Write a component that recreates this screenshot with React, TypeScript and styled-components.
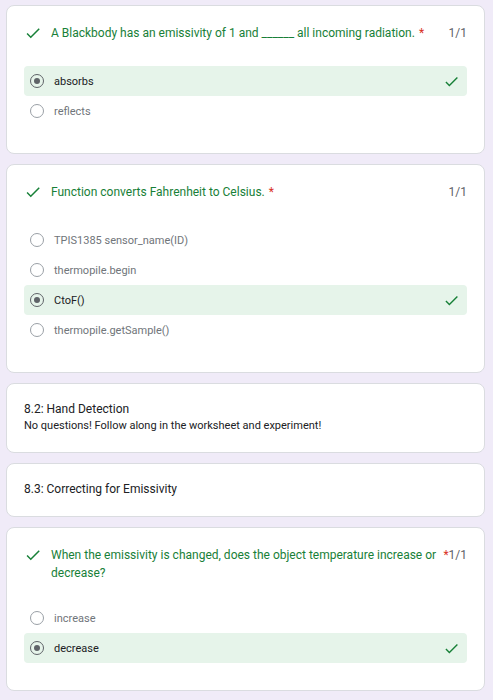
import React from "react";
import styled, { createGlobalStyle } from "styled-components";

const Global = createGlobalStyle`
  html, body { margin: 0; padding: 0; background: #f0ebf8; }
  body { font-family: Roboto, "Liberation Sans", Arial, sans-serif; -webkit-font-smoothing: antialiased; }
  * { box-sizing: border-box; }
`;

const Page = styled.div`
  display: flex;
  flex-direction: column;
  gap: 10px;
  padding: 5px 8px 10px 6px;
`;

const Card = styled.section`
  background: #fff;
  border: 1px solid #dadce0;
  border-radius: 8px;
  padding: 18px 17px 27px;
`;

const SectionCard = styled.section`
  background: #fff;
  border: 1px solid #dadce0;
  border-radius: 8px;
  padding: 16px 17px 18px;
`;

const Header = styled.div`
  display: flex;
  align-items: flex-start;
  min-height: 21px;
  margin-bottom: 21px;
  font-size: 12px;
  line-height: 18px;
`;

const HeaderIcon = styled.span`
  flex: none;
  width: 18px;
  height: 18px;
  margin-right: 9px;
  display: flex;
  color: #188038;
`;

const Title = styled.span`
  flex: 0 1 auto;
  color: #188038;
`;

const Star = styled.span`
  flex: none;
  margin-left: 4px;
  color: #d93025;
`;

const Score = styled.span`
  flex: none;
  margin-left: auto;
  color: #5f6368;
`;

const Options = styled.div`
  display: flex;
  flex-direction: column;
`;

const Row = styled.div<{ $correct?: boolean }>`
  display: flex;
  align-items: center;
  height: 30px;
  padding: 0 7px 0 6px;
  border-radius: 4px;
  background: ${(p) => (p.$correct ? "#e6f4ea" : "transparent")};
  font-size: 11px;
  color: ${(p) => (p.$correct ? "#202124" : "#70757a")};
`;

const Radio = styled.span<{ $checked?: boolean }>`
  flex: none;
  width: 14px;
  height: 14px;
  border-radius: 50%;
  border: 1.5px solid ${(p) => (p.$checked ? "#5f6368" : "#9aa0a6")};
  display: flex;
  align-items: center;
  justify-content: center;
  margin-right: 10px;
  &::after {
    content: "";
    width: 6px;
    height: 6px;
    border-radius: 50%;
    background: #5f6368;
    display: ${(p) => (p.$checked ? "block" : "none")};
  }
`;

const Label = styled.span`
  flex: 1;
`;

const RowCheck = styled.span`
  flex: none;
  width: 17px;
  height: 17px;
  display: flex;
  color: #188038;
`;

const SectionTitle = styled.div`
  font-size: 12px;
  line-height: 18px;
  color: #202124;
`;

const SectionDesc = styled.div`
  font-size: 11px;
  line-height: 16px;
  color: #202124;
`;

const Check = () => (
  <svg viewBox="0 0 24 24" width="100%" height="100%" fill="currentColor">
    <path d="M9 16.17L4.83 12l-1.42 1.41L9 19 21 7l-1.41-1.41z" />
  </svg>
);

type Q = { title: string; options: string[]; chosen: number };

const questions: Q[] = [
  {
    title: "A Blackbody has an emissivity of 1 and ______ all incoming radiation.",
    options: ["absorbs", "reflects"],
    chosen: 0,
  },
  {
    title: "Function converts Fahrenheit to Celsius.",
    options: ["TPIS1385 sensor_name(ID)", "thermopile.begin", "CtoF()", "thermopile.getSample()"],
    chosen: 2,
  },
  {
    title: "When the emissivity is changed, does the object temperature increase or decrease?",
    options: ["increase", "decrease"],
    chosen: 1,
  },
];

const Question = ({ q }: { q: Q }) => (
  <Card>
    <Header>
      <HeaderIcon>
        <Check />
      </HeaderIcon>
      <Title>{q.title}</Title>
      <Star>*</Star>
      <Score>1/1</Score>
    </Header>
    <Options>
      {q.options.map((o, i) => (
        <Row key={o} $correct={i === q.chosen}>
          <Radio $checked={i === q.chosen} />
          <Label>{o}</Label>
          {i === q.chosen && (
            <RowCheck>
              <Check />
            </RowCheck>
          )}
        </Row>
      ))}
    </Options>
  </Card>
);

export default function App() {
  return (
    <>
      <Global />
      <Page>
        <Question q={questions[0]} />
        <Question q={questions[1]} />
        <SectionCard>
          <SectionTitle>8.2: Hand Detection</SectionTitle>
          <SectionDesc>No questions! Follow along in the worksheet and experiment!</SectionDesc>
        </SectionCard>
        <SectionCard>
          <SectionTitle>8.3: Correcting for Emissivity</SectionTitle>
        </SectionCard>
        <Question q={questions[2]} />
      </Page>
    </>
  );
}
